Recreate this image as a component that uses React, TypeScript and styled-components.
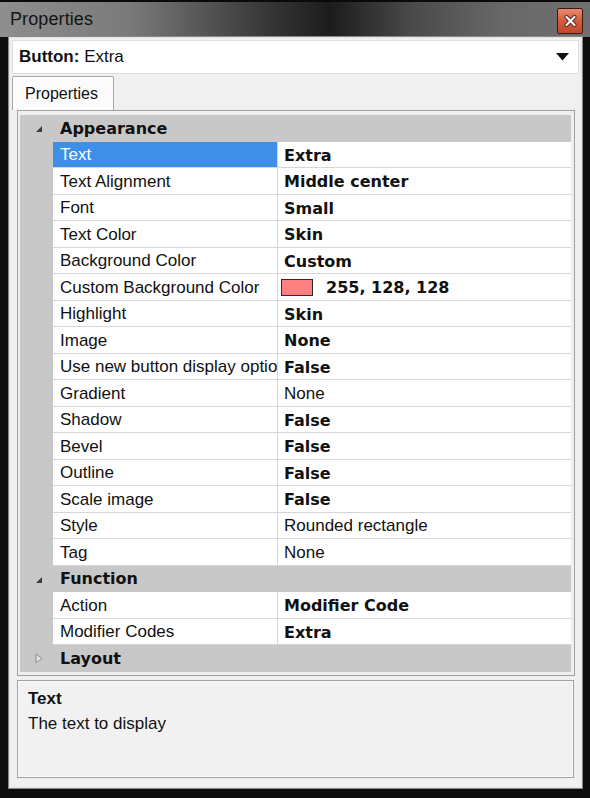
import styled, { createGlobalStyle } from 'styled-components';

const GlobalStyle = createGlobalStyle`
  html, body {
    margin: 0;
    padding: 0;
    background: #0c0c0c;
  }
  body {
    font-family: "Liberation Sans", Arial, sans-serif;
  }
`;

const Frame = styled.div`
  width: 590px;
  height: 798px;
  box-sizing: border-box;
  display: flex;
  flex-direction: column;
  background: #0e0e0e;
  overflow: hidden;
`;

const TitleBar = styled.div`
  height: 37px;
  flex-shrink: 0;
  display: flex;
  align-items: center;
  justify-content: space-between;
  padding: 0 7px 0 10px;
  box-sizing: border-box;
  border-top: 2px solid #0a0a0a;
  background: linear-gradient(
    90deg,
    #8e8e8e 0%,
    #7a7a7a 22%,
    #3a3a3a 44%,
    #1c1c1c 56%,
    #4a4a4a 70%,
    #686868 85%,
    #707070 100%
  );
`;

const Title = styled.div`
  font-size: 18px;
  color: #141414;
  letter-spacing: 0.1px;
`;

const CloseButton = styled.div`
  width: 26px;
  height: 26px;
  box-sizing: border-box;
  border: 1px solid #3b1a12;
  border-radius: 2px;
  background: linear-gradient(180deg, #e98a70 0%, #d35c40 50%, #bf472d 100%);
  display: flex;
  align-items: center;
  justify-content: center;
  margin-top: 2px;
`;

const Body = styled.div`
  flex: 1;
  display: flex;
  flex-direction: column;
  padding: 0 8px 10px 9px;
  min-height: 0;
`;

const Panel = styled.div`
  flex: 1;
  display: flex;
  flex-direction: column;
  background: #f0f0f0;
  border: 1px solid #e4e4e4;
  box-shadow: 0 0 0 1px #8a8a8a;
  padding: 2px 2px 9px 2px;
  min-height: 0;
`;

const Combo = styled.div`
  height: 34px;
  flex-shrink: 0;
  box-sizing: border-box;
  background: #ffffff;
  border: 1px solid #dedede;
  display: flex;
  align-items: center;
  justify-content: space-between;
  padding: 0 9px 0 6px;
  font-size: 17px;
  color: #111;
  b {
    font-weight: bold;
  }
`;

const TabStrip = styled.div`
  height: 36px;
  flex-shrink: 0;
  display: flex;
  align-items: flex-end;
`;

const Tab = styled.div`
  width: 102px;
  height: 34px;
  box-sizing: border-box;
  border: 1px solid #a8a8a8;
  border-bottom: none;
  border-radius: 2px 2px 0 0;
  background: #fbfbfb;
  display: flex;
  align-items: center;
  padding-left: 12px;
  font-size: 16px;
  color: #111;
`;

const GridBox = styled.div`
  margin: 0 4px 0 5px;
  border: 1px solid #a2a2a2;
  padding: 4px 3px 3px 2px;
  background: #efefef;
  flex-shrink: 0;
`;

const Row = styled.div`
  display: grid;
  grid-template-columns: 33px 225px 1fr;
  height: 26.5px;
`;

const Gutter = styled.div`
  background: #c8c8c8;
  display: flex;
  align-items: center;
  justify-content: center;
  padding-left: 4px;
  box-sizing: border-box;
`;

const CategoryRow = styled(Row)`
  background: #c8c8c8;
`;

const CategoryLabel = styled.div`
  grid-column: 2 / 4;
  display: flex;
  align-items: center;
  padding-left: 7px;
  font-family: "DejaVu Sans", Verdana, sans-serif;
  font-weight: bold;
  font-size: 16px;
  color: #111;
`;

const NameCell = styled.div<{ $selected?: boolean }>`
  box-sizing: border-box;
  display: flex;
  align-items: center;
  padding: 2px 0 0 7px;
  overflow: hidden;
  white-space: nowrap;
  font-size: 17px;
  color: ${(p) => (p.$selected ? '#ffffff' : '#111')};
  background: ${(p) => (p.$selected ? '#3d8fe8' : '#ffffff')};
  border-bottom: 1px solid #d6d6d6;
  border-right: 1px solid #d6d6d6;
`;

const ValueCell = styled.div<{ $bold?: boolean }>`
  box-sizing: border-box;
  display: flex;
  align-items: center;
  gap: 13px;
  padding: 2px 0 0 6px;
  overflow: hidden;
  white-space: nowrap;
  background: #ffffff;
  border-bottom: 1px solid #d6d6d6;
  color: #111;
  font-family: ${(p) =>
    p.$bold ? '"DejaVu Sans", Verdana, sans-serif' : '"Liberation Sans", Arial, sans-serif'};
  font-weight: ${(p) => (p.$bold ? 'bold' : 'normal')};
  font-size: ${(p) => (p.$bold ? '16px' : '17px')};
`;

const Swatch = styled.span<{ $color: string }>`
  width: 32px;
  height: 17px;
  box-sizing: border-box;
  border: 1px solid #2a2a2a;
  background: ${(p) => p.$color};
  margin-left: -3px;
`;

const DescBox = styled.div`
  flex: 1;
  margin: 4px 5px 0 5px;
  border: 1px solid #a2a2a2;
  box-shadow: inset 0 0 0 1px #fafafa;
  padding: 5px 10px;
  background: #f1f1f1;
  font-size: 17px;
  line-height: 25px;
  color: #111;
`;

const DescTitle = styled.div`
  font-weight: bold;
`;

type Prop = { name: string; value: string; bold?: boolean; swatch?: string; selected?: boolean };
type Category = { title: string; open: boolean; items: Prop[] };

const categories: Category[] = [
  {
    title: 'Appearance',
    open: true,
    items: [
      { name: 'Text', value: 'Extra', bold: true, selected: true },
      { name: 'Text Alignment', value: 'Middle center', bold: true },
      { name: 'Font', value: 'Small', bold: true },
      { name: 'Text Color', value: 'Skin', bold: true },
      { name: 'Background Color', value: 'Custom', bold: true },
      { name: 'Custom Background Color', value: '255, 128, 128', bold: true, swatch: '#ff8080' },
      { name: 'Highlight', value: 'Skin', bold: true },
      { name: 'Image', value: 'None', bold: true },
      { name: 'Use new button display options', value: 'False', bold: true },
      { name: 'Gradient', value: 'None' },
      { name: 'Shadow', value: 'False', bold: true },
      { name: 'Bevel', value: 'False', bold: true },
      { name: 'Outline', value: 'False', bold: true },
      { name: 'Scale image', value: 'False', bold: true },
      { name: 'Style', value: 'Rounded rectangle' },
      { name: 'Tag', value: 'None' },
    ],
  },
  {
    title: 'Function',
    open: true,
    items: [
      { name: 'Action', value: 'Modifier Code', bold: true },
      { name: 'Modifier Codes', value: 'Extra', bold: true },
    ],
  },
  { title: 'Layout', open: false, items: [] },
];

function Expander({ open }: { open: boolean }) {
  if (open) {
    return (
      <svg width="8" height="8" viewBox="0 0 8 8" style={{ marginTop: 2 }}>
        <polygon points="7,1 7,7 1,7" fill="#3c3c3c" />
      </svg>
    );
  }
  return (
    <svg width="8" height="11" viewBox="0 0 8 11">
      <polygon points="1,1 7,5.5 1,10" fill="#e4e4e4" stroke="#8c8c8c" strokeWidth="1" />
    </svg>
  );
}

export default function App() {
  return (
    <>
      <GlobalStyle />
      <Frame>
        <TitleBar>
          <Title>Properties</Title>
          <CloseButton>
            <svg width="13" height="12" viewBox="0 0 13 12">
              <path d="M2.5 2 L10.5 10 M10.5 2 L2.5 10" stroke="#5a2418" strokeWidth="4" strokeLinecap="round" />
              <path d="M2.5 2 L10.5 10 M10.5 2 L2.5 10" stroke="#ffffff" strokeWidth="2.2" strokeLinecap="round" />
            </svg>
          </CloseButton>
        </TitleBar>
        <Body>
          <Panel>
            <Combo>
              <span>
                <b>Button:</b> Extra
              </span>
              <svg width="13" height="8" viewBox="0 0 13 8">
                <polygon points="0,0 13,0 6.5,7.5" fill="#111" />
              </svg>
            </Combo>
            <TabStrip>
              <Tab>Properties</Tab>
            </TabStrip>
            <GridBox>
              {categories.map((cat) => (
                <div key={cat.title}>
                  <CategoryRow>
                    <Gutter>
                      <Expander open={cat.open} />
                    </Gutter>
                    <CategoryLabel>{cat.title}</CategoryLabel>
                  </CategoryRow>
                  {cat.items.map((item) => (
                    <Row key={item.name}>
                      <Gutter />
                      <NameCell $selected={item.selected}>{item.name}</NameCell>
                      <ValueCell $bold={item.bold}>
                        {item.swatch && <Swatch $color={item.swatch} />}
                        {item.value}
                      </ValueCell>
                    </Row>
                  ))}
                </div>
              ))}
            </GridBox>
            <DescBox>
              <DescTitle>Text</DescTitle>
              <div>The text to display</div>
            </DescBox>
          </Panel>
        </Body>
      </Frame>
    </>
  );
}
